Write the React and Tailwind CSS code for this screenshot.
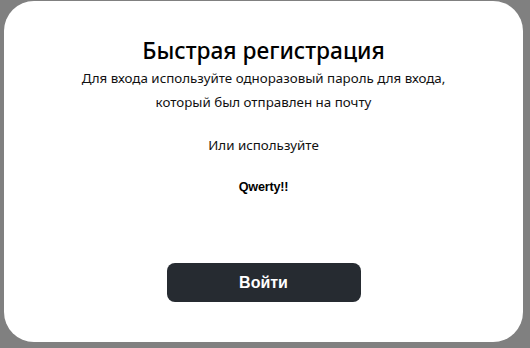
import React from 'react';

const App = () => {
  return (
    <div className="h-[348px] w-[530px] bg-[#808080] pl-[4px] pt-[1px]">
      <div className="flex h-[341px] w-[519px] flex-col items-center rounded-[30px] bg-white font-['Noto_Sans',sans-serif] text-black">
        <h1 className="mt-[36px] text-[22.7px] font-medium leading-[28px]">Быстрая регистрация</h1>
        <p className="mt-[1px] text-center text-[13.35px] leading-[24px] text-[#111]">
          Для входа используйте одноразовый пароль для входа,
          <br />
          который был отправлен на почту
        </p>
        <p className="mt-[19px] text-[13.35px] leading-[24px] text-[#111]">Или используйте</p>
        <p className="mt-[18px] font-['Liberation_Sans',sans-serif] text-[12.6px] font-bold leading-[24px] tracking-[-0.2px]">Qwerty!!</p>
        <button className="mt-[64px] flex h-[39px] w-[194px] items-center justify-center rounded-[8px] bg-[#262b31] font-['Liberation_Sans',sans-serif] text-[16px] font-bold text-white">
          Войти
        </button>
      </div>
    </div>
  );
};

export default App;
